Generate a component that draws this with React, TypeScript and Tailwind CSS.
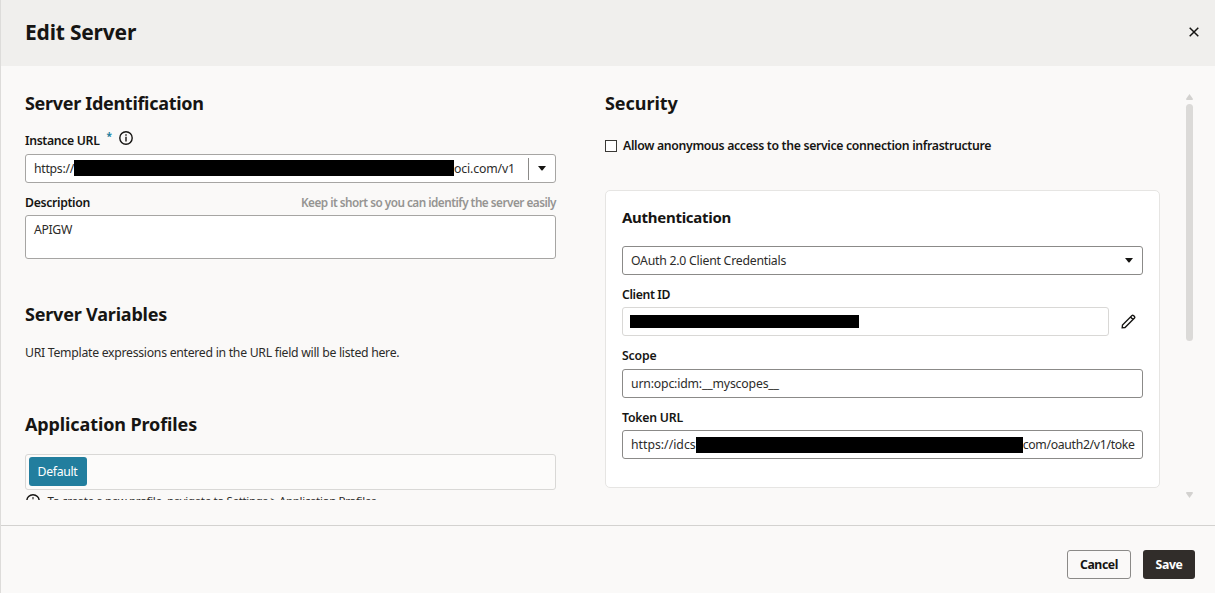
import type { ReactNode } from "react";

function Heading({ children, className }: { children: ReactNode; className: string }) {
  return <h2 className={`text-[18px] leading-[27px] font-bold whitespace-nowrap ${className}`}>{children}</h2>;
}

function Label({ children, className }: { children: ReactNode; className: string }) {
  return <label className={`block h-5 leading-5 font-semibold whitespace-nowrap ${className}`}>{children}</label>;
}

function Redacted({ className }: { className: string }) {
  return <span className={`shrink-0 bg-black ${className}`} />;
}

function InfoIcon({ className }: { className: string }) {
  return (
    <svg className={className} viewBox="0 0 14 14" fill="none" stroke="#161513" strokeWidth="1.4">
      <circle cx="7" cy="7" r="6.2" />
      <path d="M7 5.8v4.8M7 3.3v1.4" />
    </svg>
  );
}

function Caret() {
  return (
    <svg className="h-[5px] w-[8px]" viewBox="0 0 8 5" fill="#161513">
      <path d="M0 0h8L4.6 4.2a.8.8 0 0 1-1.2 0z" />
    </svg>
  );
}

function Identification() {
  return (
    <section className="w-[531px] shrink-0">
      <Heading className="tracking-[-0.31px]">Server Identification</Heading>
      <div className="mt-[11px] flex h-[26px] items-start">
        <Label className="mt-[3px] tracking-[-0.34px]">Instance URL</Label>
        <span className="ml-[7px] mt-[3px] w-[6px] text-[10px] leading-[10px] font-bold text-[#227e9e]">*</span>
        <InfoIcon className="mt-[3px] ml-[7px] size-[14px]" />
      </div>
      <div className="flex h-[29px] items-center rounded-[3px] border border-[#a6a5a3] bg-white pl-[8px]">
        <span className="w-[40px] pt-[2px] tracking-[-0.28px] text-[#2c2b29]">https://</span>
        <Redacted className="mb-[2px] h-4 w-[380px]" />
        <span className="flex-1 pt-[2px] tracking-[-0.13px] text-[#2c2b29]">oci.com/v1</span>
        <span className="flex h-[22px] w-[27px] items-center justify-center border-l border-[#8b8a88]">
          <Caret />
        </span>
      </div>
      <div className="mt-[10px] mb-[2px] flex items-center justify-between">
        <Label className="tracking-[-0.33px]">Description</Label>
        <span className="-mt-[2px] text-[11.75px] leading-5 font-semibold tracking-[-0.51px] whitespace-nowrap text-[#959492]">
          Keep it short so you can identify the server easily
        </span>
      </div>
      <div className="h-[44px] rounded-[3px] border border-[#a6a5a3] bg-white px-[8px] pt-[4px] leading-5 tracking-[-0.34px] text-[#2c2b29]">
        APIGW
      </div>

      <Heading className="mt-[42px] tracking-[-0.2px]">Server Variables</Heading>
      <p className="mt-[15px] leading-5 tracking-[-0.28px] whitespace-nowrap text-[#2c2b29]">
        URI Template expressions entered in the URL field will be listed here.
      </p>

      <Heading className="mt-[48px] tracking-[-0.12px]">Application Profiles</Heading>
      <div className="mt-[16px] h-[36px] rounded-[3px] border border-[#d9d8d6] bg-[#fcfbfa] px-[2.5px] pt-[2px]">
        <button className="h-[29px] rounded-[3px] bg-[#227e9e] px-[9px] pt-[2px] tracking-[-0.3px] text-white">
          Default
        </button>
      </div>
      <div className="mt-[4px] flex items-start pl-[1px]">
        <InfoIcon className="size-[14px] shrink-0" />
        <p className="-mt-px ml-[7.5px] text-[11.5px] leading-4 tracking-[-0.34px] whitespace-nowrap text-[#2c2b29]">
          To create a new profile, navigate to Settings &gt; Application Profiles
        </p>
      </div>
    </section>
  );
}

function Security() {
  return (
    <section className="ml-[49px] w-[555px] shrink-0">
      <Heading className="tracking-[-0.06px]">Security</Heading>
      <div className="mt-[19px] flex h-5 items-center">
        <span className="size-[12px] border border-[#3a3936] bg-white" />
        <Label className="ml-[6px] tracking-[-0.32px]">
          Allow anonymous access to the service connection infrastructure
        </Label>
      </div>
      <div className="mt-[34px] h-[298px] rounded-[5px] border border-[#e6e5e3] bg-white px-[16px] pt-[14px]">
        <h3 className="text-[15px] leading-[24px] font-bold tracking-[-0.28px]">Authentication</h3>
        <div className="mt-[17px] flex h-[29px] items-center justify-between rounded-[3px] border border-[#8b8a88] px-[8px] pr-[9px]">
          <span className="pt-[2px] tracking-[-0.23px] text-[#2c2b29]">OAuth 2.0 Client Credentials</span>
          <Caret />
        </div>
        <Label className="mt-[10px] tracking-[-0.37px]">Client ID</Label>
        <div className="mt-[2px] flex items-center">
          <div className="flex h-[29px] w-[487px] items-center rounded-[3px] border border-[#d9d8d6] pl-[7px]">
            <Redacted className="h-[13px] w-[229px]" />
          </div>
          <svg className="ml-[12px] size-[15px]" viewBox="0 0 15 15" fill="none" stroke="#161513" strokeWidth="1.4">
            <path d="M1.2 13.8l.3-2.8L11 1.5q.7-.6 1.4 0l1.1 1.1q.6.7 0 1.4L4 13.5zM9.6 3.1l2.3 2.3" />
          </svg>
        </div>
        <Label className="mt-[10px] tracking-[-0.16px]">Scope</Label>
        <div className="mt-[3px] flex h-[29px] items-center rounded-[3px] border border-[#8b8a88] px-[8px] pt-[2px] tracking-[-0.17px] text-[#2c2b29]">
          urn:opc:idm:__myscopes__
        </div>
        <Label className="mt-[10px] tracking-[-0.2px]">Token URL</Label>
        <div className="mt-[2px] flex h-[29px] items-center rounded-[3px] border border-[#8b8a88] px-[8px]">
          <span className="w-[65px] pt-[2px] text-[#2c2b29]">https://idcs</span>
          <Redacted className="h-4 w-[327px]" />
          <span className="pt-[2px] tracking-[-0.32px] text-[#2c2b29]">com/oauth2/v1/toke</span>
        </div>
      </div>
    </section>
  );
}

function Scrollbar() {
  return (
    <div className="ml-[26px] flex h-[408px] w-[7px] flex-col items-center pt-[4px]">
      <svg className="h-[6px] w-[7px] shrink-0" viewBox="0 0 7 6" fill="#d3d2d0">
        <path d="M3.5 0L7 5Q7 6 6 6H1Q0 6 0 5z" />
      </svg>
      <span className="mt-[4px] h-[237px] w-[7px] rounded-full bg-[#dbdad8]" />
      <svg className="mt-auto h-[6px] w-[7px] shrink-0" viewBox="0 0 7 6" fill="#d3d2d0">
        <path d="M3.5 6L7 1Q7 0 6 0H1Q0 0 0 1z" />
      </svg>
    </div>
  );
}

export default function App() {
  return (
    <div className="flex h-[593px] w-[1215px] flex-col overflow-hidden border-l border-[#dddcda] bg-[#faf9f8] font-['Noto_Sans',sans-serif] text-[12.25px] text-[#161513]">
      <header className="flex h-[66px] shrink-0 items-center justify-between bg-[#f0efed] pr-[16px] pl-[24px]">
        <h1 className="pb-[2px] text-[21px] leading-[30px] font-bold tracking-[-0.2px]">Edit Server</h1>
        <svg className="mb-[2px] size-[10px]" viewBox="0 0 10 10" stroke="#161513" strokeWidth="1.5">
          <path d="M.7.7l8.6 8.6M9.3.7L.7 9.3" />
        </svg>
      </header>
      <main className="flex h-[434px] shrink-0 items-start overflow-hidden pt-[24px] pl-[24px]">
        <Identification />
        <Security />
        <Scrollbar />
      </main>
      <footer className="mt-[25px] flex flex-1 items-start justify-end gap-[12px] border-t border-[#d3d2d0] pt-[24px] pr-[20px] font-bold">
        <button className="h-[29px] w-[64px] rounded-[3px] border border-[#8b8a88] pt-[2px] tracking-[-0.4px]">
          Cancel
        </button>
        <button className="h-[29px] w-[52px] rounded-[3px] bg-[#312d2a] pt-[2px] tracking-[-0.35px] text-white">
          Save
        </button>
      </footer>
    </div>
  );
}
